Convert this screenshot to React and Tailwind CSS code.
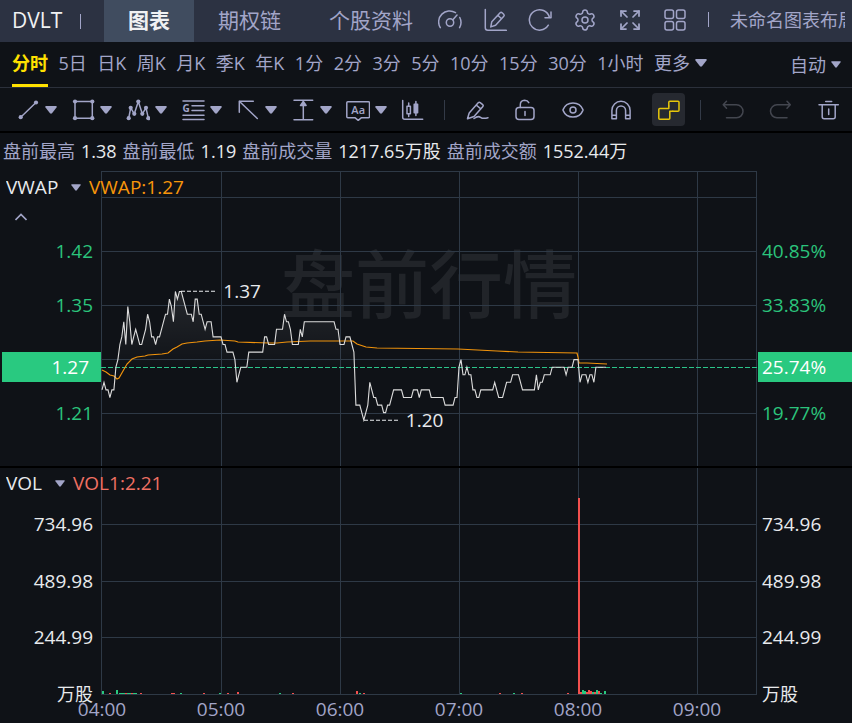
import React, { useState } from 'react';
import { Settings, Expand, Eye } from 'lucide-react';

const pageTabs = ['图表', '期权链', '个股资料'];

const periods = [
  '分时', '5日', '日K', '周K', '月K', '季K', '年K',
  '1分', '2分', '3分', '5分', '10分', '15分', '30分', '1小时',
];

const stats = [
  { label: '盘前最高', value: '1.38' },
  { label: '盘前最低', value: '1.19' },
  { label: '盘前成交量', value: '1217.65万股' },
  { label: '盘前成交额', value: '1552.44万' },
];

const hours = ['04:00', '05:00', '06:00', '07:00', '08:00', '09:00'];
const volumeTicks = ['734.96', '489.98', '244.99', '万股'];

// Width of the plot area in chart units, and the units per trading minute
const PLOT_W = 656;
const PER_MINUTE = 119 / 60;

// [minutes since 04:00, price in cents]
const prices = [
  [0, 124], [1, 125], [2, 124], [3, 124], [4, 123], [5, 124], [6, 124], [7, 127], [8, 128],
  [9, 130], [10, 131], [11, 133], [12, 130], [13, 135], [14, 133], [15, 130], [16, 131],
  [17, 132], [18, 131], [19, 130], [20, 130], [21, 131], [22, 132], [23, 134], [24, 133],
  [25, 131], [26, 131], [27, 130], [28, 131], [29, 131], [30, 132], [32, 134], [33, 134],
  [34, 136], [35, 135], [36, 133], [37, 137], [38, 136], [39, 137], [40, 137], [41, 136],
  [43, 134], [45, 134], [46, 133], [47, 136], [48, 136], [49, 134], [50, 134], [52, 132],
  [53, 133], [55, 133], [56, 131], [60, 131], [61, 130], [62, 130], [63, 129], [66, 129],
  [67, 128], [68, 125], [69, 126], [70, 127], [73, 127], [74, 129], [81, 129], [82, 131],
  [83, 131], [84, 130], [87, 130], [88, 132], [91, 132], [92, 134], [93, 133], [94, 133],
  [95, 132], [96, 130], [99, 130], [100, 132], [101, 131], [102, 133], [117, 133], [118, 132],
  [119, 132], [120, 130], [122, 130], [123, 131], [125, 131], [126, 130], [127, 129],
  [128, 122], [130, 122], [132, 120], [134, 122], [135, 125], [137, 123], [138, 123],
  [139, 122], [141, 122], [142, 121], [143, 121], [144, 122], [145, 122], [147, 124],
  [151, 124], [152, 123], [156, 123], [157, 124], [159, 124], [160, 123], [161, 124],
  [165, 124], [166, 123], [172, 123], [173, 122], [177, 122], [178, 123], [179, 123],
  [180, 127], [181, 128], [182, 126], [183, 126], [184, 127], [185, 126], [186, 126],
  [187, 124], [188, 124], [189, 123], [190, 123], [191, 124], [197, 124], [198, 125],
  [200, 123], [202, 123], [204, 125], [206, 125], [207, 126], [210, 126], [212, 124],
  [218, 124], [219, 126], [220, 124], [221, 125], [222, 125], [223, 126], [226, 126],
  [227, 127], [233, 127], [234, 126], [235, 127], [237, 127], [238, 128], [240, 128],
  [241, 125], [242, 126], [244, 126], [245, 125], [246, 126], [247, 126], [248, 125],
  [249, 127], [254, 127],
];

const vwap =
  '1,199 5,201 9,204 13,205 16,208 18,207 22,200 26,193 31,188 36,186 44,185 47,184 61,183 67,182 ' +
  '72,178 76,176 81,173 86,172 96,171 104,170 119,169 134,170 137,171 168,172 176,172 186,171 ' +
  '209,170 236,170 252,170 256,173 265,176 276,177 357,178 396,180 417,181 476,182 477,186 ' +
  '478,192 486,192 506,193';

// [x, height, up]
const volumes = [
  [1, 3, 0], [8, 1, 1], [15, 4, 0], [18, 1, 0], [20, 1, 0], [22, 1, 0], [24, 1, 1], [26, 1, 0],
  [28, 1, 0], [30, 1, 1], [32, 1, 0], [34, 1, 0], [39, 1, 1], [70, 1, 1], [72, 1, 1],
  [79, 1, 0], [102, 1, 1], [118, 1, 0], [126, 1, 1], [136, 2, 1], [178, 1, 0], [191, 1, 1],
  [255, 3, 1], [258, 1, 0], [262, 1, 1], [359, 1, 0], [398, 1, 1], [412, 1, 0], [420, 1, 1],
  [466, 1, 1], [477, 196, 1], [479, 2, 1], [481, 4, 0], [483, 3, 0], [485, 2, 1], [487, 4, 1],
  [489, 3, 1], [491, 2, 0], [493, 2, 1], [495, 4, 0], [497, 3, 1], [499, 1, 0], [503, 3, 0],
];

const priceX = (minute) => 1 + minute * PER_MINUTE;
const priceY = (cents) => 120.5 + (137 - cents) * 7.57;

const Triangle = ({ className = 'w-3 h-2' }) => (
  <svg viewBox="0 0 12 8" className={`shrink-0 ${className}`} fill="currentColor" aria-hidden="true">
    <path d="M1 0h10q1.200 .4.500 1.400L7 7.300q-1 .9-2 0L.500 1.400Q-.200.400 1 0z" />
  </svg>
);

const Icon = ({ children }) => (
  <svg
    viewBox="0 0 24 24"
    className="size-6 shrink-0"
    fill="none"
    stroke="currentColor"
    strokeWidth="1.5"
    strokeLinecap="round"
    strokeLinejoin="round"
    aria-hidden="true"
  >
    {children}
  </svg>
);

const Dots = ({ points }) => (
  <g fill="currentColor" stroke="none">
    {points.map(([x, y]) => (
      <circle key={`${x}-${y}`} cx={x} cy={y} r="2.1" />
    ))}
  </g>
);

const headerTools = [
  {
    label: '仪表盘',
    icon: (
      <Icon>
        <path d="M2.300 19.700A11 11 0 0 1 17.500 4.600M21.800 9.500a11 11 0 0 1-.2 10.200M14.900 11.700 19 7" />
        <circle cx="12" cy="14.500" r="3.700" />
      </Icon>
    ),
  },
  {
    label: '编辑图表',
    icon: (
      <Icon>
        <path d="M2.300 1.500v18.300q0 2.500 2.500 2.500h18.500" />
        <path d="M7.800 18.900l1-5.200 8.300-8.900q1-.9 2 0l1.600 1.500q1 1 .1 2L12.600 17.300zM14.800 7.300l3.700 3.500" />
      </Icon>
    ),
  },
  {
    label: '刷新',
    icon: (
      <Icon>
        <path d="M20.300 17.200A10.200 10.200 0 1 1 21.400 9.300" />
        <path d="M23 4v5.700h-6" />
      </Icon>
    ),
  },
  { label: '设置', icon: <Settings className="size-6" strokeWidth={1.5} /> },
  { label: '全屏', icon: <Expand className="size-6" strokeWidth={1.75} /> },
  {
    label: '布局',
    icon: (
      <Icon>
        <rect x="2" y="2" width="8.500" height="8.500" rx="2" />
        <rect x="13.500" y="2" width="8.500" height="8.500" rx="2" />
        <rect x="2" y="13.500" width="8.500" height="8.500" rx="2" />
        <rect x="13.500" y="13.500" width="8.500" height="8.500" rx="2" />
      </Icon>
    ),
  },
];

const drawTools = [
  {
    label: '线段',
    icon: (
      <Icon>
        <path d="M4.700 19.200 20 4.500" />
        <Dots points={[[4.7, 19.2], [20, 4.5]]} />
      </Icon>
    ),
  },
  {
    label: '矩形',
    icon: (
      <Icon>
        <path d="M4 3.500h17.300v16.700H4z" />
        <Dots points={[[4, 3.5], [21.3, 3.5], [21.3, 20.2], [4, 20.2]]} />
      </Icon>
    ),
  },
  {
    label: '波浪',
    icon: (
      <Icon>
        <path d="M2.700 20.200 4.700 9.800l3.600 6 4-12.300 4 12.300 3.700-6 2.300 10.400" />
        <Dots points={[[2.7, 20.2], [4.7, 9.8], [8.3, 15.8], [12.3, 3.5], [16.3, 15.8], [20, 9.8], [22.3, 20.2]]} />
      </Icon>
    ),
  },
  {
    label: '江恩',
    icon: (
      <Icon>
        <path d="M2 3h21M11 7.700h12M11 12.400h12M2 17.200h21M2 21.500h21" />
        <text x="1.500" y="14" fontSize="10" fontWeight="700" fill="currentColor" stroke="none">G</text>
      </Icon>
    ),
  },
  {
    label: '箭头',
    icon: (
      <Icon>
        <path d="M3.300 14.200v-11h14M3.300 3.200l18 17.300" />
      </Icon>
    ),
  },
  {
    label: '测量',
    icon: (
      <Icon>
        <path d="M3 2.200h18.700M3 21.800h18.700M12.300 4v17.500" />
        <path d="M9.500 7.500l2.800-4 2.800 4z" fill="currentColor" />
      </Icon>
    ),
  },
  {
    label: '文字',
    icon: (
      <Icon>
        <path d="M1.800 3.800h20.700q1 0 1 1v14q0 1-1 1h-7.300l-3 2.500-3-2.500H1.800q-1 0-1-1v-14q0-1 1-1z" />
        <text x="12.200" y="15.800" fontSize="11" fontWeight="600" textAnchor="middle" fill="currentColor" stroke="none">Aa</text>
      </Icon>
    ),
  },
];

const editTools = [
  {
    label: '画笔',
    icon: (
      <Icon>
        <path d="M2.500 20.800l1.700-5.800 9-10.200q1-1 2-.2l2.500 2q1 1 .2 2L9 18.500zM11.500 7.200l4.300 3.700" />
        <path d="M9 20.500q4-3 6.500-1.200t7.500.5" />
      </Icon>
    ),
  },
  {
    label: '锁定',
    icon: (
      <Icon>
        <rect x="3" y="9.500" width="18" height="12" rx="3" />
        <path d="M7.300 9.500V6.800q0-4.300 4.300-4.500 3 0 4.200 2.300M12 13.500v4" />
      </Icon>
    ),
  },
  { label: '显示', icon: <Eye className="size-6" strokeWidth={1.5} /> },
  {
    label: '磁吸',
    icon: (
      <Icon>
        <path d="M2.900 20.800v-8.400a9.100 9.100 0 0 1 18.200 0v8.400h-4.500v-8.200a4.600 4.600 0 0 0-9.200 0v8.200zM2.900 17.200h4.500M16.600 17.200h4.500" />
      </Icon>
    ),
  },
  {
    label: '连续绘制',
    active: true,
    icon: (
      <Icon>
        <path d="M11.800 8V4.200q0-1 1-1H21q1 0 1 1v8q0 1-1 1h-5.200" />
        <path d="M8 10.500H2.800q-1 0-1 1v8.700q0 1 1 1h9q1 0 1-1V15M8 10.500h3.800V8M12.800 15v-1.800h3" />
      </Icon>
    ),
  },
];

const historyTools = [
  {
    label: '撤销',
    disabled: true,
    icon: (
      <Icon>
        <path d="M5.500 3.300 2.200 6.800l3.300 3.500M2.200 6.800h13.300a6.500 6.500 0 0 1 0 13h-10" />
      </Icon>
    ),
  },
  {
    label: '重做',
    disabled: true,
    icon: (
      <Icon>
        <path d="M18 3.300l3.300 3.500-3.300 3.500M21.300 6.800H8a6.500 6.500 0 0 0 0 13h10" />
      </Icon>
    ),
  },
  {
    label: '删除',
    icon: (
      <Icon>
        <path d="M2 6.800h19.300M8.700 3.500h6M5.200 6.800v12q0 2 2 2h9q2 0 2-2v-12M11.700 11v5.500" />
      </Icon>
    ),
  },
];

const ToolButton = ({ tool }) => (
  <button
    type="button"
    aria-label={tool.label}
    disabled={tool.disabled}
    className={`flex size-[33px] shrink-0 items-center justify-center rounded-sm disabled:text-[#43464f] ${
      tool.active ? 'bg-[#262930] text-[#e6c60a]' : ''
    }`}
  >
    {tool.icon}
  </button>
);

const Separator = ({ className = 'h-5' }) => (
  <span className={`w-px shrink-0 bg-[#333a47] ${className}`} />
);

const Header = () => {
  const [tab, setTab] = useState('图表');

  return (
    <header className="flex h-[42px] items-center overflow-hidden bg-[#2c3242]">
      <h1 className="w-20 shrink-0 pl-3 text-[21px] text-[#f0f1f3]">DVLT</h1>
      <span className="mr-[23px] h-[15px] w-px shrink-0 bg-[#a2a5c8]" />
      <nav className="flex h-full shrink-0">
        {pageTabs.map((name) => (
          <button
            key={name}
            type="button"
            onClick={() => setTab(name)}
            className={`px-6 text-[21px] ${tab === name ? 'bg-[#404c5f] font-bold text-[#f0f1f3]' : ''}`}
          >
            {name}
          </button>
        ))}
      </nav>
      <div className="mr-[7px] flex min-w-0 items-center gap-[21px] pb-[3px] pl-px">
        {headerTools.map((tool) => (
          <button key={tool.label} type="button" aria-label={tool.label} className="shrink-0">
            {tool.icon}
          </button>
        ))}
        <span className="h-[15px] w-px shrink-0 bg-[#a2a5c8]" />
        <span className="overflow-hidden text-lg whitespace-nowrap">未命名图表布局</span>
      </div>
    </header>
  );
};

const PeriodBar = () => {
  const [period, setPeriod] = useState('分时');

  return (
    <div className="flex h-[46px] justify-between border-b border-[#2b303b] pr-[11px] pl-3 text-lg whitespace-nowrap">
      <div className="flex max-w-[695px] flex-1 justify-between">
        {periods.map((name) => (
          <button
            key={name}
            type="button"
            onClick={() => setPeriod(name)}
            className={`border-b-3 ${
              period === name ? 'border-[#ffe100] font-bold text-[#ffe100]' : 'border-transparent'
            }`}
          >
            {name}
          </button>
        ))}
        <button type="button" className="flex items-center gap-[5px] border-b-3 border-transparent">
          更多
          <Triangle />
        </button>
      </div>
      <label className="flex items-center gap-[5px]">
        <select aria-label="刷新方式" className="appearance-none bg-transparent">
          <option>自动</option>
        </select>
        <Triangle className="h-[7px] w-2.5" />
      </label>
    </div>
  );
};

const Toolbar = () => (
  <div className="flex h-[43px] items-center gap-[15px] overflow-hidden pl-[11px]">
    <div className="flex">
      {drawTools.map((tool) => (
        <button key={tool.label} type="button" aria-label={tool.label} className="flex w-[55px] items-center gap-[5px] pl-[5px]">
          {tool.icon}
          <Triangle />
        </button>
      ))}
      <ToolButton
        tool={{
          label: '指标',
          icon: (
            <Icon>
              <path d="M1.700 2.500v16.700q0 2 2 2h18M7.700 5v3.200M7.700 15.800v2.700M6 8.200h3.400v7.600H6zM14.900 3.500v14" />
              <path d="M13.200 6.200h3.400v8.600h-3.400z" fill="currentColor" />
            </Icon>
          ),
        }}
      />
    </div>
    <Separator />
    {editTools.map((tool) => (
      <ToolButton key={tool.label} tool={tool} />
    ))}
    <Separator />
    {historyTools.map((tool) => (
      <ToolButton key={tool.label} tool={tool} />
    ))}
  </div>
);

const Grid = ({ rows, height }) => (
  <g stroke="#2e3946" strokeWidth="1">
    {rows.map((y) => (
      <line key={y} x1="0" x2={PLOT_W} y1={y + 0.5} y2={y + 0.5} />
    ))}
    {[0.5, 120.5, 239.5, 358.5, 477.5, 596.5, 655.5].map((x) => (
      <line key={x} x1={x} x2={x} y1="0" y2={height} vectorEffect="non-scaling-stroke" />
    ))}
  </g>
);

const IndicatorHeader = ({ name, value, className }) => (
  <div className={`flex items-center ${className}`}>
    <select aria-label="指标" className="appearance-none bg-transparent text-[#e8eaed]">
      <option>{name}</option>
    </select>
    <Triangle className="mr-2 ml-3 h-[7px] w-2.5" />
    <span>{value}</span>
  </div>
);

// Leader line and value next to an extreme of the price curve
const Marker = ({ minute, cents, children }) => (
  <div
    className="absolute flex -translate-y-1/2 items-center gap-1.5 text-[#e8eaed]"
    style={{ left: `${(priceX(minute) / PLOT_W) * 100}%`, top: `${Math.floor(priceY(cents))}px` }}
  >
    <span className="h-px w-9 bg-[repeating-linear-gradient(90deg,#e8eaed_0_4px,transparent_4px_6px)]" />
    {children}
  </div>
);

const PriceChart = () => {
  const line = prices.map(([m, c]) => `${priceX(m).toFixed(1)},${priceY(c).toFixed(1)}`).join(' ');

  return (
    <section className="relative grid h-[295px] grid-cols-[101px_1fr_95px] text-[#2bc47c]">
      <div className="pt-[53px] text-right">
        <p className="h-[54px] pr-2 leading-[54px]">1.42</p>
        <p className="h-[54px] pr-2 leading-[54px]">1.35</p>
        <p className="mt-5 ml-0.5 h-[30px] bg-[#29c980] pr-3 leading-[30px] text-white">1.27</p>
        <p className="mt-1 h-[54px] pr-2 leading-[54px]">1.21</p>
      </div>
      <div className="relative">
        <p className="absolute inset-x-0 top-[63px] text-center text-[74px] leading-[100px] font-medium text-[#212429]">
          盘前行情
        </p>
        <svg viewBox={`0 0 ${PLOT_W} 295`} preserveAspectRatio="none" className="absolute inset-0 size-full">
          <defs>
            <linearGradient id="area" gradientUnits="userSpaceOnUse" x1="0" x2="0" y1="120" y2="200">
              <stop offset="0" stopColor="#fff" stopOpacity="0.09" />
              <stop offset="1" stopColor="#fff" stopOpacity="0" />
            </linearGradient>
          </defs>
          <Grid rows={[0, 26, 80, 134, 188, 242]} height={295} />
          <polygon points={`1,295 ${line} 504,295`} fill="url(#area)" />
          <line x1="0" x2={PLOT_W} y1="196.5" y2="196.5" stroke="#2bc48a" strokeDasharray="5 2" />
          <polyline points={vwap} fill="none" stroke="#f0930c" strokeWidth="1.2" />
          <polyline points={line} fill="none" stroke="#dcdcdc" strokeWidth="1.1" />
        </svg>
        <Marker minute={40} cents={137}>1.37</Marker>
        <Marker minute={132} cents={120}>1.20</Marker>
      </div>
      <div className="pt-[53px]">
        <p className="h-[54px] pl-[5px] leading-[54px]">40.85%</p>
        <p className="h-[54px] pl-[5px] leading-[54px]">33.83%</p>
        <p className="mt-5 ml-px h-[30px] bg-[#29c980] pl-1 leading-[30px] text-white">25.74%</p>
        <p className="mt-1 h-[54px] pl-[5px] leading-[54px]">19.77%</p>
      </div>
      <div className="absolute top-0 left-1.5 text-[#a2a5c8]">
        <IndicatorHeader
          name="VWAP"
          value={<span className="text-[#f7960b]">VWAP:1.27</span>}
          className="h-8"
        />
        <button type="button" aria-label="收起" className="flex h-7 w-[30px] items-center justify-center">
          <svg viewBox="0 0 12 8" className="h-2 w-3" fill="none" stroke="currentColor" strokeWidth="1.6" aria-hidden="true">
            <path d="M.500 7 6 1.500 11.500 7" />
          </svg>
        </button>
      </div>
    </section>
  );
};

const VolumeChart = () => (
  <section className="relative grid h-[254px] grid-cols-[101px_1fr_95px] text-[#e8eaed]">
    <div className="grid grid-rows-4 items-center pt-7 pr-2 text-right">
      {volumeTicks.map((tick) => (
        <span key={tick} className={tick === '万股' ? 'text-lg' : ''}>{tick}</span>
      ))}
    </div>
    <div className="min-w-0">
      <svg viewBox={`0 0 ${PLOT_W} 227`} preserveAspectRatio="none" className="h-[227px] w-full">
        <Grid rows={[56, 113, 169, 226]} height={227} />
        {volumes.map(([x, h, up]) => (
          <rect key={x} x={x} y={226 - h} width="2" height={h} fill={up ? '#f2504e' : '#29c980'} />
        ))}
      </svg>
      <div className="grid h-[27px] grid-cols-[119fr_119fr_119fr_119fr_119fr_60fr] items-center pl-px text-[#a2a5c8]">
        {hours.map((hour) => (
          <span key={hour} className="w-fit -translate-x-1/2">{hour}</span>
        ))}
      </div>
    </div>
    <div className="grid grid-rows-4 items-center pt-7 pl-[5px]">
      {volumeTicks.map((tick) => (
        <span key={tick} className={tick === '万股' ? 'text-lg' : ''}>{tick}</span>
      ))}
    </div>
    <div className="absolute top-0 left-1.5 text-[#a2a5c8]">
      <IndicatorHeader
        name="VOL"
        value={<span className="text-[#f07063]">VOL1:2.21</span>}
        className="h-[30px]"
      />
    </div>
  </section>
);

const App = () => (
  <div className="min-h-screen overflow-hidden bg-[#0f1217] font-['Open_Sans','Noto_Sans_CJK_SC',sans-serif] text-[#a2a5c8]">
    <Header />
    <PeriodBar />
    <Toolbar />
    <main className="border-t-2 border-black">
      <dl className="flex h-[38px] items-center gap-1.5 pb-0.5 pl-[3px] text-lg whitespace-nowrap">
        {stats.map((stat) => (
          <div key={stat.label} className="flex gap-1.5">
            <dt>{stat.label}</dt>
            <dd className="text-[#e8eaed]">{stat.value}</dd>
          </div>
        ))}
      </dl>
      <div className="text-[19px]">
        <PriceChart />
        <div className="h-0.5 bg-black" />
        <VolumeChart />
      </div>
    </main>
  </div>
);

export default App;
